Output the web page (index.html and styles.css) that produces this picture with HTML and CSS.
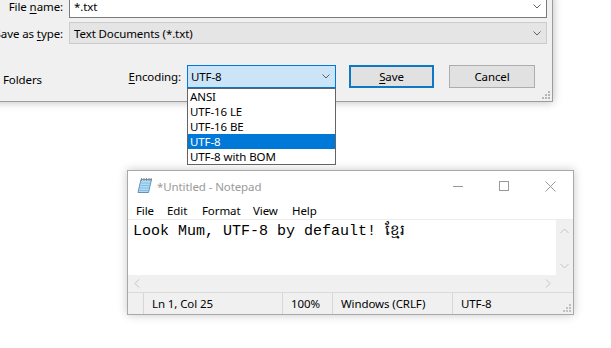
FILE: index.html
```html
<!DOCTYPE html>
<html>
<head>
<meta charset="utf-8">
<link rel="stylesheet" href="styles.css">
</head>
<body>
<div class="dialog">
  <div class="row">
    <span class="lbl">File <u>n</u>ame:</span>
    <div class="field">*.txt<svg class="chev" width="8" height="5" viewBox="0 0 8 5"><polyline points="0.5,0.5 4,4 7.5,0.5" fill="none" stroke="#606060"/></svg></div>
  </div>
  <div class="row row2">
    <span class="lbl">Save as <u>t</u>ype:</span>
    <div class="field gray">Text Documents (*.txt)<svg class="chev" width="8" height="5" viewBox="0 0 8 5"><polyline points="0.5,0.5 4,4 7.5,0.5" fill="none" stroke="#606060"/></svg></div>
  </div>
  <div class="row bottom">
    <span class="folders">Folders</span>
    <span class="spacer"></span>
    <span class="enc-lbl"><u>E</u>ncoding:</span>
    <div class="enc">
      <div class="combo">UTF-8<svg class="chev" width="8" height="5" viewBox="0 0 8 5"><polyline points="0.5,0.5 4,4 7.5,0.5" fill="none" stroke="#606060"/></svg></div>
      <ul class="list">
        <li>ANSI</li>
        <li>UTF-16 LE</li>
        <li>UTF-16 BE</li>
        <li class="sel">UTF-8</li>
        <li>UTF-8 with BOM</li>
      </ul>
    </div>
    <button class="btn default"><u>S</u>ave</button>
    <button class="btn cancel">Cancel</button>
  </div>
  <svg class="grip dgrip" width="8" height="8" viewBox="0 0 8 8"><g fill="#b5b5b5"><rect x="6" y="0" width="2" height="2"/><rect x="3" y="3" width="2" height="2"/><rect x="6" y="3" width="2" height="2"/><rect x="0" y="6" width="2" height="2"/><rect x="3" y="6" width="2" height="2"/><rect x="6" y="6" width="2" height="2"/></g></svg>
</div>

<div class="notepad">
  <div class="titlebar">
    <svg class="appicon" width="16" height="17" viewBox="0 0 16 17">
      <path d="M4 2.5h10.5l-3 13H1z" fill="#aedcf6" stroke="#5f93bd"/>
      <path d="M4.2 6h9M3.6 8.5h9M3 11h9M2.4 13.5h9" stroke="#7fb3d8" stroke-width="0.8"/>
      <path d="M4.5 1v3M7 1v3M9.5 1v3M12 1v3M14.2 1v3" stroke="#8a8a8a" stroke-width="1"/>
    </svg>
    <span class="title">*Untitled - Notepad</span>
    <span class="spacer"></span>
    <span class="ctl"><svg width="10" height="10" viewBox="0 0 10 10"><path d="M0 5.5h10" stroke="#999" stroke-width="1"/></svg></span>
    <span class="ctl"><svg width="10" height="10" viewBox="0 0 10 10"><rect x="0.5" y="0.5" width="9" height="9" fill="none" stroke="#999"/></svg></span>
    <span class="ctl"><svg width="11" height="11" viewBox="0 0 11 11"><path d="M0.5 0.5l10 10M10.5 0.5l-10 10" stroke="#999" stroke-width="1"/></svg></span>
  </div>
  <div class="menubar">
    <span>File</span><span>Edit</span><span>Format</span><span>View</span><span>Help</span>
  </div>
  <div class="editor">
    <div class="text">Look Mum, UTF-8 by default! ខ្មែរ</div>
    <div class="vscroll">
      <svg width="9" height="6" viewBox="0 0 9 6"><polyline points="0.5,5 4.5,1 8.5,5" fill="none" stroke="#c2c2c2"/></svg>
      <svg width="9" height="6" viewBox="0 0 9 6"><polyline points="0.5,1 4.5,5 8.5,1" fill="none" stroke="#c2c2c2"/></svg>
    </div>
    <div class="hscroll">
      <svg width="6" height="9" viewBox="0 0 6 9"><polyline points="5,0.5 1,4.5 5,8.5" fill="none" stroke="#c2c2c2"/></svg>
      <svg width="6" height="9" viewBox="0 0 6 9"><polyline points="1,0.5 5,4.5 1,8.5" fill="none" stroke="#c2c2c2"/></svg>
    </div>
    <div class="corner"></div>
  </div>
  <div class="statusbar">
    <span class="cell first"></span>
    <span class="cell">Ln 1, Col 25</span>
    <span class="cell">100%</span>
    <span class="cell">Windows (CRLF)</span>
    <span class="cell last">UTF-8<svg class="grip" width="8" height="8" viewBox="0 0 8 8"><g fill="#c0c0c0"><rect x="6" y="0" width="2" height="2"/><rect x="3" y="3" width="2" height="2"/><rect x="6" y="3" width="2" height="2"/><rect x="0" y="6" width="2" height="2"/><rect x="3" y="6" width="2" height="2"/><rect x="6" y="6" width="2" height="2"/></g></svg></span>
  </div>
</div>
</body>
</html>
```

FILE: styles.css
```css
html, body {
  margin: 0;
  padding: 0;
}
body {
  width: 611px;
  height: 348px;
  overflow: hidden;
  position: relative;
  background: #ffffff;
  font-family: "Noto Sans", "Open Sans", sans-serif;
  font-size: 11.5px;
  letter-spacing: -0.1px;
  color: #000;
}
u { text-decoration: underline; text-underline-offset: 2px; }

/* ---------- Save dialog ---------- */
.dialog {
  position: absolute;
  left: -12px;
  top: -6px;
  width: 565px;
  height: 108px;
  box-sizing: border-box;
  background: #f0f0f0;
  border: 1px solid #9c9c9c;
  box-shadow: 0 0 9px rgba(0, 0, 0, 0.28);
  padding: 0 5px 0 0;
  display: flex;
  flex-direction: column;
}
.row {
  display: flex;
  align-items: center;
  gap: 6px;
}
.lbl {
  flex: none;
  width: 74px;
  text-align: right;
  white-space: nowrap;
}
.field {
  flex: 1;
  height: 23px;
  box-sizing: border-box;
  border: 1px solid #7a7a7a;
  background: #fff;
  display: flex;
  align-items: center;
  justify-content: space-between;
  padding: 0 5px 0 4px;
}
.row2 { margin-top: 4px; }
.field.gray {
  height: 22px;
  background: #e5e5e5;
  border-color: #cccccc;
}
.chev { flex: none; }

.bottom {
  margin-top: 21px;
  height: 23px;
  gap: 0;
}
.folders { padding-left: 14px; padding-top: 6px; }
.spacer { flex: 1; }
.enc-lbl { white-space: nowrap; }
.enc {
  position: relative;
  width: 149px;
  height: 23px;
  margin-left: 6px;
}
.combo {
  height: 23px;
  box-sizing: border-box;
  background: #cce4f7;
  border: 1px solid #0078d7;
  display: flex;
  align-items: center;
  justify-content: space-between;
  padding: 0 5px 0 3px;
}
.list {
  position: absolute;
  left: 0;
  top: 23px;
  width: 149px;
  box-sizing: border-box;
  margin: 0;
  padding: 0;
  list-style: none;
  background: #fff;
  border: 1px solid #646464;
  z-index: 2;
}
.list li {
  height: 15px;
  line-height: 15px;
  padding-left: 2px;
  white-space: nowrap;
}
.list li.sel {
  background: #0078d7;
  color: #fff;
}
.btn {
  font-family: inherit;
  font-size: 11.5px;
  letter-spacing: -0.1px;
  color: #000;
  height: 23px;
  box-sizing: border-box;
  background: #e1e1e1;
  border: 1px solid #adadad;
  padding: 0;
  margin: 0;
}
.btn.default {
  width: 85px;
  margin-left: 13px;
  border: 2px solid #0f78c4;
}
.btn.cancel {
  width: 86px;
  margin-left: 15px;
  margin-right: 12px;
}
.dgrip {
  position: absolute;
  right: 3px;
  bottom: 2px;
}

/* ---------- Notepad ---------- */
.notepad {
  position: absolute;
  left: 127px;
  top: 170px;
  width: 447px;
  height: 145px;
  box-sizing: border-box;
  border: 1px solid #a8a8a8;
  background: #fff;
  box-shadow: 0 0 9px rgba(0, 0, 0, 0.22);
  display: flex;
  flex-direction: column;
}
.titlebar {
  height: 30px;
  display: flex;
  align-items: center;
  padding-left: 9px;
}
.appicon { flex: none; margin-top: -1px; }
.title {
  margin-left: 4px;
  color: #9a9a9a;
  white-space: nowrap;
}
.ctl {
  width: 46px;
  height: 30px;
  display: flex;
  align-items: center;
  justify-content: center;
}
.menubar {
  height: 18px;
  display: grid;
  grid-template-columns: 31px 35px 51px 39px auto;
  align-items: center;
  padding-left: 8px;
}
.editor {
  border-top: 1px solid #ececec;
  height: 72px;
  display: grid;
  grid-template-columns: 1fr 17px;
  grid-template-rows: 1fr 17px;
}
.text {
  font-family: "Liberation Mono", "DejaVu Sans Mono", monospace;
  font-size: 15px;
  letter-spacing: 0;
  line-height: 18px;
  padding: 3px 0 0 5px;
  white-space: nowrap;
  overflow: hidden;
}
.vscroll {
  background: #f0f0f0;
  display: flex;
  flex-direction: column;
  align-items: center;
  justify-content: space-between;
  padding: 8px 0 6px;
}
.hscroll {
  background: #f0f0f0;
  display: flex;
  align-items: center;
  justify-content: space-between;
  padding: 0 5px 0 6px;
}
.corner { background: #f0f0f0; }
.statusbar {
  height: 22px;
  box-sizing: border-box;
  border-top: 1px solid #dadada;
  background: #f0f0f0;
  display: grid;
  grid-template-columns: 15px 139px 50px 120px 1fr;
}
.cell {
  display: flex;
  align-items: center;
  padding-left: 8px;
  border-left: 1px solid #d7d7d7;
  white-space: nowrap;
}
.cell.first { border-left: none; padding: 0; }
.cell.last { position: relative; }
.grip {
  position: absolute;
  right: 2px;
  bottom: 2px;
}
```
